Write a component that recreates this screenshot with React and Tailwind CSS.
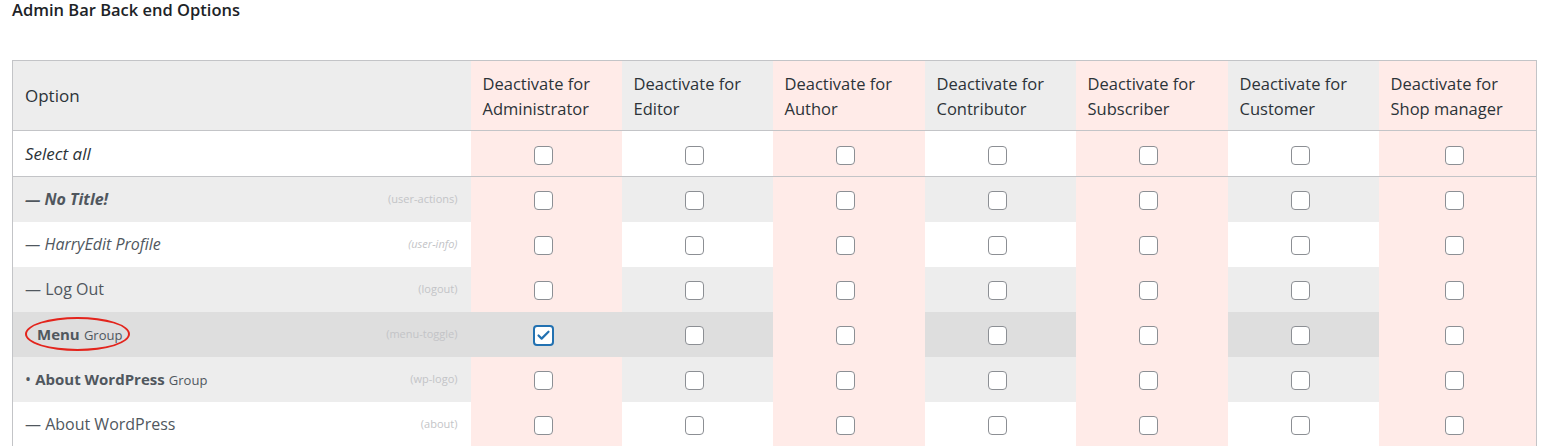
import { Check } from "lucide-react";

const roles = [
  { name: "Administrator", w: "w-[151px]" },
  { name: "Editor", w: "w-[151px]" },
  { name: "Author", w: "w-[152px]" },
  { name: "Contributor", w: "w-[151px]" },
  { name: "Subscriber", w: "w-[152px]" },
  { name: "Customer", w: "w-[151px]" },
  { name: "Shop manager", w: "w-[158px]" },
];

const rows = [
  { id: "user-actions", bg: "bg-[#ededed]", label: <span className="font-bold italic">— No Title!</span> },
  { id: "user-info", bg: "bg-white", italicSlug: true, label: <span className="italic">— HarryEdit Profile</span> },
  { id: "logout", bg: "bg-[#ededed]", label: <span>— Log Out</span> },
  {
    id: "menu-toggle",
    bg: "bg-[#dedede]",
    checked: true,
    label: (
      <span className="inline-block rounded-[50%] border-2 border-[#e3241c] py-[3px] pr-[6px] pl-[10px]">
        <span className="text-[15px] font-bold">Menu</span> <span className="text-[13px]">Group</span>
      </span>
    ),
  },
  {
    id: "wp-logo",
    bg: "bg-[#ededed]",
    label: (
      <span>
        • <span className="text-[15px] font-bold">About WordPress</span> <span className="text-[13px]">Group</span>
      </span>
    ),
  },
  { id: "about", bg: "bg-white", label: <span>— About WordPress</span> },
];

const Box = ({ checked }) =>
  checked ? (
    <span className="inline-flex h-[21px] w-[21px] items-center justify-center rounded-[4px] border-2 border-[#2271b1] bg-white align-middle">
      <Check size={15} strokeWidth={3.5} className="text-[#2271b1]" />
    </span>
  ) : (
    <span className="inline-block h-[19px] w-[19px] rounded-[4px] border border-[#8c8f94] bg-white align-middle" />
  );

const App = () => {
  return (
    <div className="h-[446px] w-[1541px] overflow-hidden bg-white font-['Open_Sans',sans-serif] text-[#2c3338]">
      <h2 className="pl-3 text-[16.5px] leading-[19px] font-semibold text-[#1d2327]">Admin Bar Back end Options</h2>
      <table className="mt-[41px] ml-3 table-fixed border-collapse border border-[#c3c4c7]">
        <colgroup>
          <col className="w-[458px]" />
          {roles.map((r) => (
            <col key={r.name} className={r.w} />
          ))}
        </colgroup>
        <thead>
          <tr className="h-[70px] border-b border-[#c3c4c7]">
            <th className="bg-[#ededed] pl-3 text-left text-[17px] font-normal">Option</th>
            {roles.map((r, i) => (
              <th
                key={r.name}
                className={`px-3 text-left align-middle text-[16.5px] leading-[25px] font-normal whitespace-nowrap ${
                  i % 2 === 0 ? "bg-[#ffebe8]" : "bg-[#ededed]"
                }`}
              >
                Deactivate for
                <br />
                {r.name}
              </th>
            ))}
          </tr>
        </thead>
        <tbody>
          <tr className="h-[46px] border-b border-[#c3c4c7]">
            <td className="bg-white pl-3 text-[17px] italic">Select all</td>
            {roles.map((r, i) => (
              <td key={r.name} className={`pr-[6px] text-center ${i % 2 === 0 ? "bg-[#ffebe8]" : "bg-white"}`}>
                <Box />
              </td>
            ))}
          </tr>
          {rows.map((row) => (
            <tr key={row.id} className="h-[45px]">
              <td className={`${row.bg} pr-[13px] pl-3 text-[16px] text-[#50575e]`}>
                <div className="flex items-center justify-between">
                  {row.label}
                  <span className={`text-[11px] text-[#c3c4c7] ${row.italicSlug ? "italic" : ""}`}>({row.id})</span>
                </div>
              </td>
              {roles.map((r, i) => {
                const pink = i % 2 === 0 && !(row.checked && i === 0);
                return (
                  <td key={r.name} className={`pr-[6px] text-center ${pink ? "bg-[#ffebe8]" : row.bg}`}>
                    <Box checked={row.checked && i === 0} />
                  </td>
                );
              })}
            </tr>
          ))}
        </tbody>
      </table>
    </div>
  );
};

export default App;
